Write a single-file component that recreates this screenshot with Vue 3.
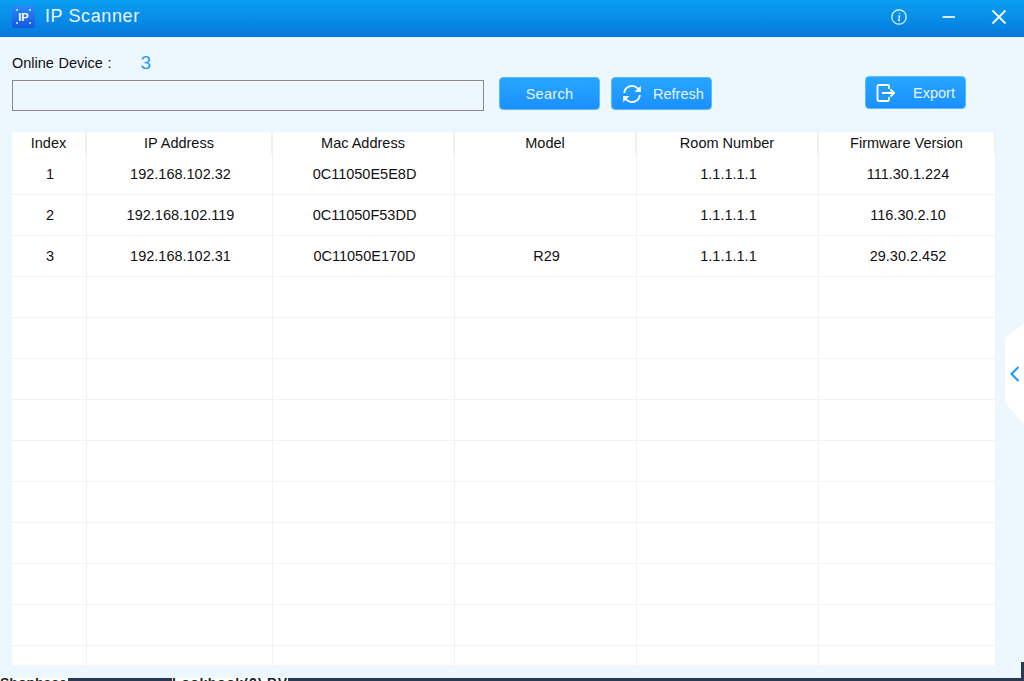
<template>
  <div class="screen">
    <div class="window">
      <header class="titlebar">
        <div class="logo"><span>IP</span></div>
        <h1 class="app-name">IP Scanner</h1>
        <div class="win-actions">
          <svg class="win-icon" viewBox="0 0 18 18">
            <circle cx="9" cy="9" r="7.2" />
            <path d="M9.6 5.2v.9M8.2 8h1.4l-1 4.6h1.3" />
          </svg>
          <svg class="win-icon" viewBox="0 0 18 18">
            <path d="M2.5 9h12.5" stroke-width="1.8" />
          </svg>
          <svg class="win-icon" viewBox="0 0 18 18">
            <path d="M2.5 2.5l13 13M15.5 2.5l-13 13" stroke-width="1.8" />
          </svg>
        </div>
      </header>

      <main class="content">
        <div class="online">
          <span class="online-label">Online Device :</span>
          <span class="online-count">{{ rows.length }}</span>
        </div>

        <div class="toolbar">
          <input class="search-input" type="text" />
          <button class="btn search-btn">Search</button>
          <button class="btn refresh-btn">
            <svg class="btn-icon" viewBox="0 0 20 20">
              <path d="M2.2 9A7.8 7.8 0 0 1 15.6 4.4L17 6.2" />
              <path d="M17.8 11A7.8 7.8 0 0 1 4.4 15.6L3 13.8" />
              <path class="solid" d="M18.8 1.8v6.2h-6.2z" />
              <path class="solid" d="M1.2 18.2v-6.2h6.2z" />
            </svg>
            Refresh
          </button>
          <button class="btn export-btn">
            <svg class="btn-icon" viewBox="0 0 20 20">
              <path d="M13 6V3.2A1.2 1.2 0 0 0 11.8 2H2.7a1.2 1.2 0 0 0-1.2 1.2v13.6A1.2 1.2 0 0 0 2.7 18h9.1a1.2 1.2 0 0 0 1.2-1.2V14" />
              <path d="M6 10h12M14.5 6.5L18 10l-3.5 3.5" />
            </svg>
            <span>Export</span>
          </button>
        </div>

        <div class="table">
          <div class="thead">
            <div v-for="col in columns" :key="col" class="th">{{ col }}</div>
          </div>
          <div v-for="(row, i) in tableRows" :key="i" class="tr">
            <div v-for="(cell, j) in row" :key="j" class="td">{{ cell }}</div>
          </div>
        </div>
      </main>

      <div class="side-handle">
        <svg viewBox="0 0 10 16" class="side-chevron"><path d="M8.5 1L1.5 8l7 7" /></svg>
      </div>
    </div>

    <div class="desktop-strip">
      <span class="strip-text first">Shopbase</span>
      <span class="strip-text second">Lookbook(2) BV</span>
    </div>
    <div class="desktop-edge"></div>
  </div>
</template>

<script setup>
const columns = ['Index', 'IP Address', 'Mac Address', 'Model', 'Room Number', 'Firmware Version']

const rows = [
  ['1', '192.168.102.32', '0C11050E5E8D', '', '1.1.1.1.1', '111.30.1.224'],
  ['2', '192.168.102.119', '0C11050F53DD', '', '1.1.1.1.1', '116.30.2.10'],
  ['3', '192.168.102.31', '0C11050E170D', 'R29', '1.1.1.1.1', '29.30.2.452'],
]

// the table always shows 12 lines, the rest stay empty
const tableRows = [...rows, ...Array.from({ length: 10 }, () => ['', '', '', '', '', ''])]
</script>

<style>
html,
body {
  margin: 0;
  overflow: hidden;
}
</style>

<style scoped>
.screen {
  position: relative;
  width: 1024px;
  height: 681px;
  overflow: hidden;
  background: #2b3a50;
  font-family: 'Liberation Sans', Arial, sans-serif;
  color: #111;
}

.window {
  position: relative;
  height: 678px;
  display: flex;
  flex-direction: column;
  background: #ecf7fe;
  overflow: hidden;
}

.titlebar {
  flex: none;
  box-sizing: border-box;
  height: 37px;
  display: flex;
  align-items: center;
  padding: 0 16px 3px 12px;
  background: linear-gradient(180deg, #0a9ff2 0%, #0579dd 100%);
  color: #fff;
}
.logo {
  width: 23px;
  height: 23px;
  margin-top: -1px;
  border-radius: 4px;
  display: flex;
  align-items: center;
  justify-content: center;
  background:
    radial-gradient(circle at 5px 5px, #9fd0ff 1px, transparent 1.5px),
    radial-gradient(circle at 18px 5px, #9fd0ff 1px, transparent 1.5px),
    radial-gradient(circle at 5px 18px, #9fd0ff 1px, transparent 1.5px),
    radial-gradient(circle at 18px 18px, #9fd0ff 1px, transparent 1.5px),
    linear-gradient(180deg, #2a8cf5, #1457e0);
  font-size: 11px;
  font-weight: 700;
}
.app-name {
  margin: -2px 0 0 10px;
  font-size: 18px;
  font-weight: 400;
  letter-spacing: 0.6px;
  color: #e8f5ff;
}
.win-actions {
  margin-left: auto;
  margin-right: 0;
  display: flex;
  align-items: center;
  gap: 32px;
}
.win-icon {
  width: 18px;
  height: 18px;
  fill: none;
  stroke: #f0f8ff;
  stroke-width: 1.2;
}

.content {
  flex: 1;
  min-height: 0;
  padding: 16px 28px 13px 12px;
  display: flex;
  flex-direction: column;
}

.online {
  display: flex;
  align-items: center;
  height: 20px;
}
.online-label {
  font-size: 14.5px;
  word-spacing: 0.6px;
}
.online-count {
  margin-left: 29px;
  font-size: 19px;
  color: #2a9df4;
}

.toolbar {
  display: flex;
  align-items: flex-start;
  height: 56px;
  margin-top: 3px;
}
.search-input {
  box-sizing: border-box;
  width: 472px;
  height: 31px;
  margin: 4px 15px 0 0;
  padding: 0 6px;
  border: 1px solid #8a8a8a;
  background: transparent;
  outline: none;
}

.btn {
  box-sizing: border-box;
  width: 101px;
  height: 33px;
  margin-top: 1px;
  padding: 0;
  border: 1px solid #5cb8ff;
  border-radius: 4px;
  background: linear-gradient(180deg, #27a6ff 0%, #1a90ff 100%);
  color: #e9f6ff;
  font-family: inherit;
  font-size: 14.5px;
  display: flex;
  align-items: center;
  justify-content: center;
}
.search-btn {
  letter-spacing: 0.3px;
}
.refresh-btn {
  margin-left: 11px;
  justify-content: flex-start;
  padding-left: 10px;
  gap: 11px;
}
.export-btn {
  margin-top: 0;
  margin-left: 153px;
  justify-content: flex-start;
  padding-left: 10px;
  gap: 17px;
}
.btn-icon {
  width: 20px;
  height: 20px;
  fill: none;
  stroke: #fff;
  stroke-width: 1.9;
}
.btn-icon .solid {
  fill: #fff;
  stroke: none;
}

.table {
  flex: 1;
  min-height: 0;
  width: 984px;
  background: #fff;
  overflow: hidden;
  font-size: 14.5px;
}
.thead,
.tr {
  display: grid;
  grid-template-columns: 75px 186px 182px 182px 182px 177px;
  text-align: center;
}
.thead {
  height: 22px;
  line-height: 22px;
}
.th {
  border-right: 2px solid #f0f0f0;
}
.tr {
  height: 41px;
  box-sizing: border-box;
  border-bottom: 1px solid #f2f2f2;
  line-height: 40px;
}
.td {
  padding-left: 2px;
  border-right: 1px solid #f2f2f2;
  white-space: nowrap;
}

.side-handle {
  position: absolute;
  right: 0;
  top: 323px;
  width: 19px;
  height: 102px;
  display: flex;
  align-items: center;
  justify-content: center;
  background: #fff;
  clip-path: polygon(100% 0, 100% 100%, 0 78%, 0 15%);
}
.side-chevron {
  width: 10px;
  height: 16px;
  fill: none;
  stroke: #1e96f5;
  stroke-width: 2;
}

.desktop-strip {
  height: 3px;
  display: flex;
  overflow: hidden;
  font-size: 14px;
  font-weight: 700;
  line-height: 10px;
}
.strip-text {
  background: #fff;
  color: #222;
  white-space: nowrap;
  overflow: hidden;
}
.strip-text.first {
  width: 68px;
}
.strip-text.second {
  width: 116px;
  margin-left: 104px;
  letter-spacing: 0.6px;
}

.desktop-edge {
  position: absolute;
  right: 0;
  top: 662px;
  width: 3px;
  height: 16px;
  background: #2b3a50;
}
</style>
